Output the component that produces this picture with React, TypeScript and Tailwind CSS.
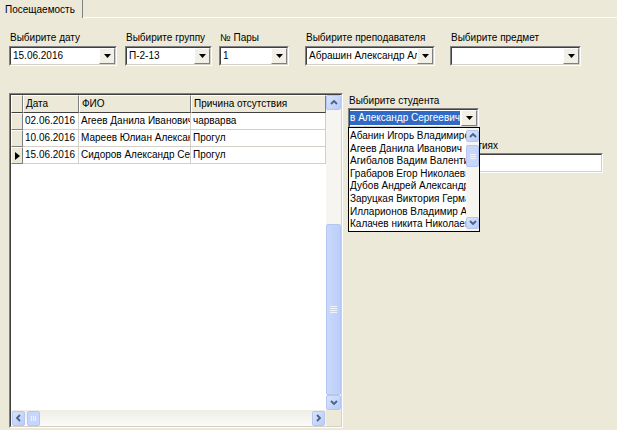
import React from "react";

function Chevron({ dir }: { dir: "up" | "down" | "left" | "right" }) {
  const d =
    dir === "up"
      ? "M1 5 L4 2 L7 5"
      : dir === "down"
      ? "M1 2 L4 5 L7 2"
      : dir === "left"
      ? "M5 1 L2 4 L5 7"
      : "M2 1 L5 4 L2 7";
  return (
    <svg width="8" height="8" viewBox="0 0 8 8">
      <path d={d} fill="none" stroke="#4D6185" strokeWidth="1.8" />
    </svg>
  );
}

function SBtn({ dir, size }: { dir: "up" | "down" | "left" | "right"; size: string }) {
  return (
    <div
      className={`${size} shrink-0 rounded-[2px] border border-[#B4C7F2] bg-gradient-to-br from-[#D8E3FD] to-[#B9CCF8] flex items-center justify-center`}
    >
      <Chevron dir={dir} />
    </div>
  );
}

function DropBtn() {
  return (
    <div className="w-[16px] h-full shrink-0 bg-[#F1EFE6] border border-t-white border-l-white border-b-[#808080] border-r-[#808080] flex items-center justify-center">
      <svg width="7" height="4" viewBox="0 0 7 4">
        <path d="M0 0 H7 L3.5 4 Z" fill="#000" />
      </svg>
    </div>
  );
}

function Sunken({ className, children }: { className: string; children?: React.ReactNode }) {
  return (
    <div className={`${className} border border-t-[#808080] border-l-[#808080] border-b-white border-r-white`}>
      <div className="h-full w-full flex border border-t-[#404040] border-l-[#404040] border-b-[#D4D0C8] border-r-[#D4D0C8] bg-white overflow-hidden">
        {children}
      </div>
    </div>
  );
}

function Combo({ w, text }: { w: string; text?: string }) {
  return (
    <Sunken className={`${w} h-[20px]`}>
      <div className="flex-1 min-w-0 overflow-hidden whitespace-nowrap pl-[2px] leading-[16px]">{text}</div>
      <DropBtn />
    </Sunken>
  );
}

function Field({ w, label, text }: { w: string; label: string; text?: string }) {
  return (
    <div className="flex flex-col gap-[2px]">
      <div className="h-[13px] leading-[13px] pl-[1px] whitespace-nowrap">{label}</div>
      <Combo w={w} text={text} />
    </div>
  );
}

const rows = [
  ["02.06.2016", "Агеев Данила Иванович", "чарварва"],
  ["10.06.2016", "Мареев Юлиан Александрович", "Прогул"],
  ["15.06.2016", "Сидоров Александр Сергеевич", "Прогул"],
];

const students = [
  "Абанин Игорь Владимирович",
  "Агеев Данила Иванович",
  "Агибалов Вадим Валентинович",
  "Грабаров Егор Николаевич",
  "Дубов Андрей Александрович",
  "Заруцкая Виктория Германовна",
  "Илларионов Владимир Александрович",
  "Калачев никита Николаевич",
];

function HeadCell({ w, children }: { w: string; children?: React.ReactNode }) {
  return (
    <div
      className={`${w} h-full shrink-0 bg-[#ECE9D8] border border-t-white border-l-white border-b-[#404040] border-r-[#808080] pl-[2px] leading-[15px] whitespace-nowrap overflow-hidden`}
    >
      {children}
    </div>
  );
}

function Cell({ w, children }: { w: string; children?: React.ReactNode }) {
  return (
    <div
      className={`${w} h-full shrink-0 border-b border-r border-[#D4D0C8] pl-[2px] leading-[16px] whitespace-nowrap overflow-hidden`}
    >
      {children}
    </div>
  );
}

function Grid() {
  return (
    <div className="w-[334px] h-[335px] border border-t-[#808080] border-l-[#808080] border-b-white border-r-white">
      <div className="h-full w-full flex flex-col border border-t-[#404040] border-l-[#404040] border-b-[#D4D0C8] border-r-[#D4D0C8] bg-white">
        <div className="flex-1 flex min-h-0">
          <div className="flex-1 flex flex-col min-w-0">
            <div className="h-[18px] flex">
              <HeadCell w="w-[12px]" />
              <HeadCell w="w-[56px]">Дата</HeadCell>
              <HeadCell w="w-[112px]">ФИО</HeadCell>
              <HeadCell w="w-[135px]">Причина отсутствия</HeadCell>
            </div>
            {rows.map((r, i) => (
              <div key={i} className="h-[17px] flex">
                <div className="w-[12px] h-full shrink-0 bg-[#ECE9D8] border border-t-white border-l-white border-b-[#808080] border-r-[#808080] flex items-center justify-center">
                  {i === 2 && (
                    <svg width="5" height="8" viewBox="0 0 5 8">
                      <path d="M0 0 L5 4 L0 8 Z" fill="#000" />
                    </svg>
                  )}
                </div>
                <Cell w="w-[56px]">{r[0]}</Cell>
                <Cell w="w-[112px]">{r[1]}</Cell>
                <Cell w="w-[135px]">{r[2]}</Cell>
              </div>
            ))}
          </div>
          <div className="w-[15px] shrink-0 flex flex-col bg-[#F6F5F0]">
            <SBtn dir="up" size="w-[15px] h-[15px]" />
            <div className="h-[114px] shrink-0" />
            <div className="flex-1 rounded-[2px] border border-[#B4C7F2] bg-gradient-to-r from-[#C9D8FC] to-[#BCCEF9] flex flex-col items-center justify-center gap-[1px]">
              <div className="w-[7px] h-[1px] bg-[#EEF3FF]" />
              <div className="w-[7px] h-[1px] bg-[#EEF3FF]" />
              <div className="w-[7px] h-[1px] bg-[#EEF3FF]" />
              <div className="w-[7px] h-[1px] bg-[#EEF3FF]" />
            </div>
            <SBtn dir="down" size="w-[15px] h-[15px]" />
          </div>
        </div>
        <div className="h-[16px] shrink-0 flex">
          <div className="flex-1 flex items-center bg-gradient-to-b from-[#EEEDE5] to-[#FBFBF8] pl-[1px] pr-[1px]">
            <SBtn dir="left" size="w-[13px] h-[15px]" />
            <div className="w-[13px] h-[15px] ml-[2px] rounded-[2px] border border-[#B4C7F2] bg-[#C6D6FC] flex items-center justify-center gap-[1px]">
              <div className="w-[1px] h-[5px] bg-[#EEF3FF]" />
              <div className="w-[1px] h-[5px] bg-[#EEF3FF]" />
              <div className="w-[1px] h-[5px] bg-[#EEF3FF]" />
            </div>
            <div className="flex-1" />
            <SBtn dir="right" size="w-[13px] h-[15px]" />
          </div>
          <div className="w-[15px] shrink-0 bg-[#ECE9D8]" />
        </div>
      </div>
    </div>
  );
}

function RightPanel() {
  return (
    <div className="relative ml-[5px] w-[256px] pt-[1px]">
      <div className="h-[13px] leading-[13px] pl-[1px] whitespace-nowrap">Выбирите студента</div>
      <Sunken className="w-[131px] h-[20px] mt-[1px]">
        <div className="flex-1 min-w-0 flex justify-end overflow-hidden pl-[1px] pr-[1px] pt-[1px]">
          <span className="whitespace-nowrap bg-[#316AC5] text-white leading-[14px] h-[14px]">
            Сидоров Александр Сергеевич
          </span>
        </div>
        <DropBtn />
      </Sunken>
      <div className="mt-[11px] flex justify-end w-[150px] overflow-visible">
        <div className="h-[13px] leading-[13px] whitespace-nowrap shrink-0">Пропуски на занятиях</div>
      </div>
      <Sunken className="w-[255px] h-[20px] mt-[1px]" />
      <div className="absolute left-0 top-[34px] w-[132px] h-[105px] border border-black bg-white flex">
        <div className="flex-1 min-w-0 pt-[2px]">
          {students.map((s) => (
            <div key={s} className="h-[12.6px] leading-[12.6px] pl-[1px] whitespace-nowrap overflow-hidden">
              {s}
            </div>
          ))}
        </div>
        <div className="w-[13px] shrink-0 flex flex-col bg-[#F6F5F0] py-[2px]">
          <SBtn dir="up" size="w-[13px] h-[12px]" />
          <div className="h-[3px] shrink-0" />
          <div className="h-[22px] shrink-0 rounded-[2px] border border-[#B4C7F2] bg-[#C6D6FC] flex flex-col items-center justify-center gap-[1px]">
            <div className="w-[6px] h-[1px] bg-[#EEF3FF]" />
            <div className="w-[6px] h-[1px] bg-[#EEF3FF]" />
            <div className="w-[6px] h-[1px] bg-[#EEF3FF]" />
          </div>
          <div className="flex-1" />
          <SBtn dir="down" size="w-[13px] h-[12px]" />
        </div>
      </div>
    </div>
  );
}

export default function App() {
  return (
    <div className="w-[617px] h-[430px] overflow-hidden bg-[#ECE9D8] text-[10px] text-black font-['Liberation_Sans',Arial,sans-serif]">
      <div className="h-[18px] flex">
        <div className="w-[83px] shrink-0 border-r border-[#808080] pl-[5px] pt-[3px] leading-[13px] whitespace-nowrap">
          Посещаемость
        </div>
        <div className="flex-1 border-b border-white" />
      </div>
      <div className="mt-[13px] pl-[9px] flex">
        <Field w="w-[108px]" label="Выбирите дату" text="15.06.2016" />
        <div className="ml-[8px]">
          <Field w="w-[87px]" label="Выбирите группу" text="П-2-13" />
        </div>
        <div className="ml-[7px]">
          <Field w="w-[70px]" label="№ Пары" text="1" />
        </div>
        <div className="ml-[16px]">
          <Field w="w-[130px]" label="Выбирите преподавателя" text="Абрашин Александр Александрович" />
        </div>
        <div className="ml-[15px]">
          <Field w="w-[131px]" label="Выбирите предмет" text="" />
        </div>
      </div>
      <div className="mt-[27px] pl-[9px] flex items-start">
        <Grid />
        <RightPanel />
      </div>
    </div>
  );
}
